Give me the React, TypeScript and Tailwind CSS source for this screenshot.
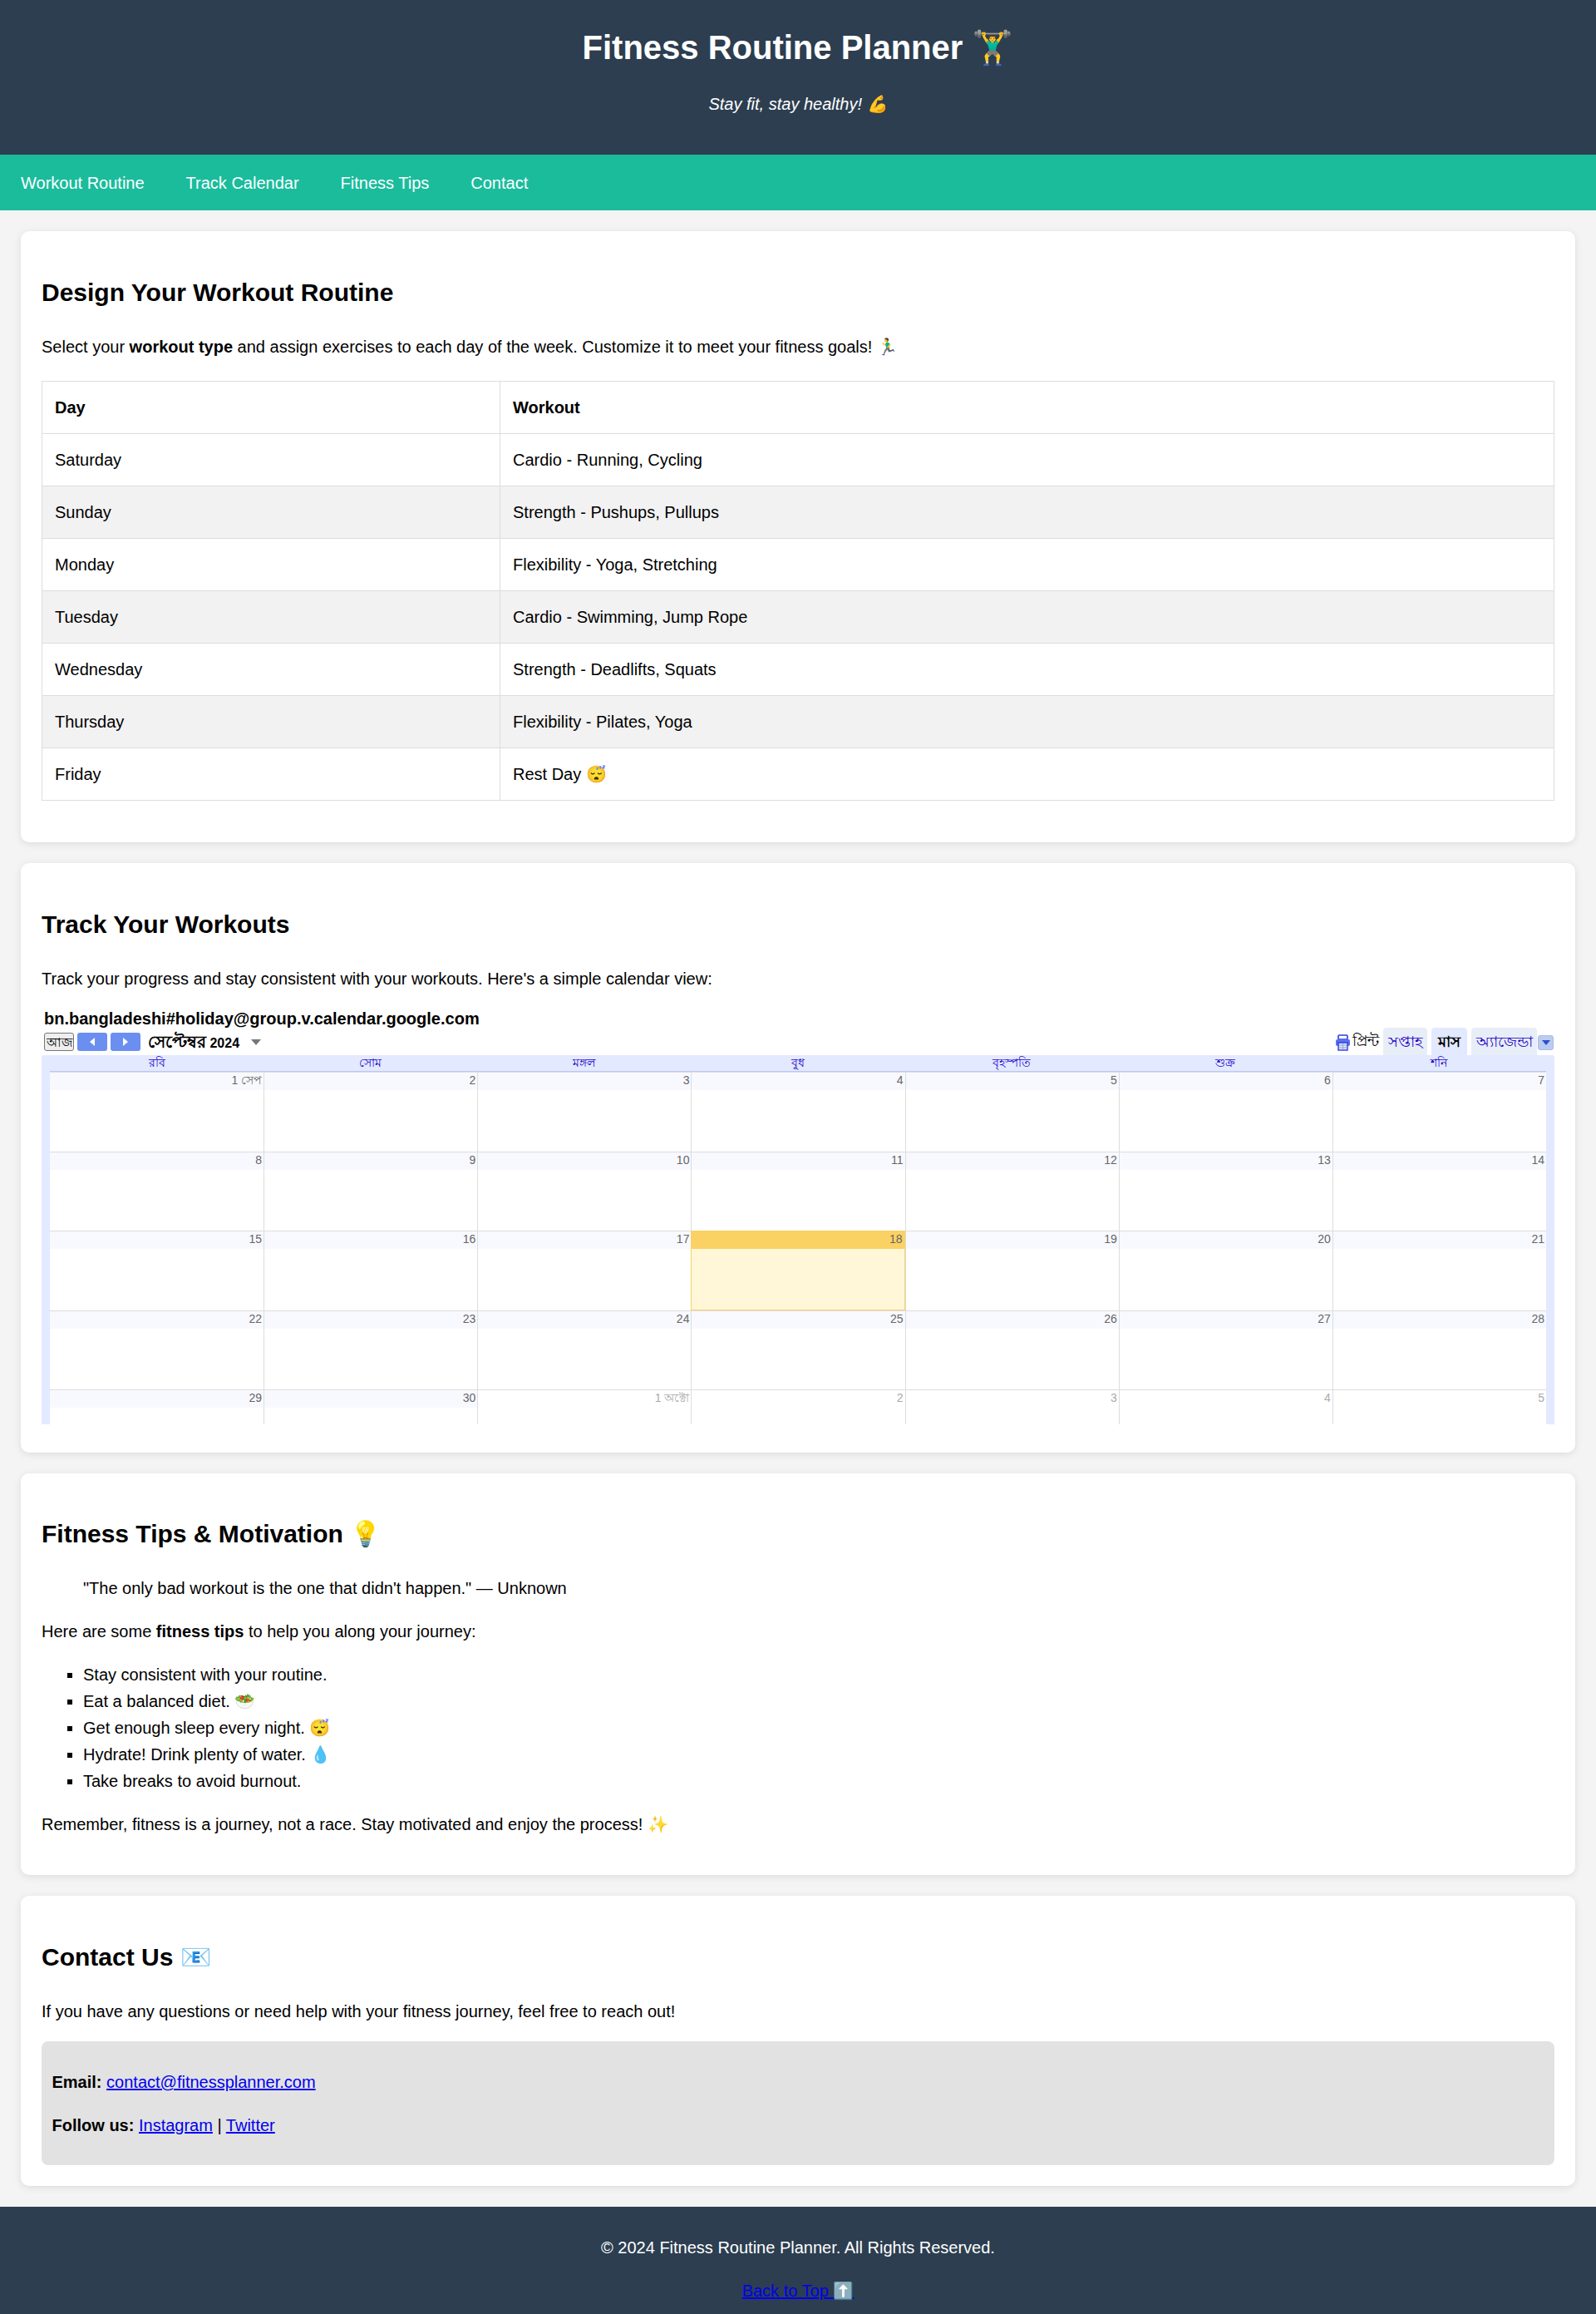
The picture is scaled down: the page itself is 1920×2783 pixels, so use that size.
const weekDays = ['রবি', 'সোম', 'মঙ্গল', 'বুধ', 'বৃহস্পতি', 'শুক্র', 'শনি'];

const routine = [
  ['Saturday', 'Cardio - Running, Cycling'],
  ['Sunday', 'Strength - Pushups, Pullups'],
  ['Monday', 'Flexibility - Yoga, Stretching'],
  ['Tuesday', 'Cardio - Swimming, Jump Rope'],
  ['Wednesday', 'Strength - Deadlifts, Squats'],
  ['Thursday', 'Flexibility - Pilates, Yoga'],
  ['Friday', 'Rest Day 😴'],
];

const calendarRows = [
  ['1 সেপ', '2', '3', '4', '5', '6', '7'],
  ['8', '9', '10', '11', '12', '13', '14'],
  ['15', '16', '17', '18', '19', '20', '21'],
  ['22', '23', '24', '25', '26', '27', '28'],
  ['29', '30', '1 অক্টো', '2', '3', '4', '5'],
];

function Card({ title, tight, children }: { title: string; tight?: boolean; children: React.ReactNode }) {
  return (
    <section className="m-[25px] rounded-[10px] bg-white p-[25px] shadow-[0_2px_10px_rgba(0,0,0,0.1)]">
      <h2 className={`text-[30px] leading-[48px] font-bold ${tight ? 'my-[24.25px]' : 'my-[25px]'}`}>{title}</h2>
      {children}
    </section>
  );
}

function Calendar() {
  return (
    <div className="mt-5 mb-[9px] h-[500px] w-[1820px] overflow-hidden text-[14px] leading-none">
      <div className="pl-[3px] text-[20px] leading-[24px] font-bold">
        bn.bangladeshi#holiday@group.v.calendar.google.com
      </div>
      <div className="flex h-[32px] items-end justify-between">
        <div className="flex items-center gap-[4px] pb-[5px] pl-[3px]">
          <button className="h-[22px] w-[36px] rounded-[3px] border border-[#777] bg-[#eee] text-[15px] leading-none">আজ</button>
          <button className="flex h-[22px] w-[36px] items-center justify-center rounded-[3px] bg-[#6b8ff0]">
            <span className="h-0 w-0 border-y-[5px] border-r-[6px] border-y-transparent border-r-white" />
          </button>
          <button className="flex h-[22px] w-[36px] items-center justify-center rounded-[3px] bg-[#6b8ff0]">
            <span className="h-0 w-0 border-y-[5px] border-l-[6px] border-y-transparent border-l-white" />
          </button>
          <span className="ml-[5px] text-[16px] font-bold">
            <span className="text-[20px]">সেপ্টেম্বর</span> 2024
          </span>
          <span className="ml-[10px] h-0 w-0 border-x-[6px] border-t-[7px] border-x-transparent border-t-[#777]" />
        </div>
        <div className="flex items-end pr-[1px]">
          <svg className="mb-[5px]" width="19" height="20" viewBox="0 0 19 20">
            <rect x="4" y="1" width="11" height="5" rx="1" fill="none" stroke="#2a3ee0" strokeWidth="1.6" />
            <rect x="1" y="6" width="17" height="8" rx="2" fill="#5b6ff0" />
            <rect x="4" y="10" width="11" height="9" fill="#dfe4f7" stroke="#2a3ee0" strokeWidth="1.4" />
            <path d="M5 13h9M5 16h9M9.500 11v7" stroke="#9aa5d8" strokeWidth="1" />
          </svg>
          <span className="mr-[5px] mb-[8px] ml-[2px] text-[18px]">প্রিন্ট</span>
          <div className="flex h-[33px] w-[53px] items-end justify-center rounded-t-[4px] bg-[#e8eef7] pb-[7px] text-[18px] text-[#2200cc]">সপ্তাহ</div>
          <div className="ml-[5px] flex h-[33px] w-[43px] items-end justify-center rounded-t-[4px] bg-[#e3e9ff] pb-[7px] text-[18px] font-bold">মাস</div>
          <div className="ml-[5px] flex h-[33px] w-[79px] items-end justify-center rounded-t-[4px] bg-[#e8eef7] pb-[7px] text-[18px] text-[#2200cc]">অ্যাজেন্ডা</div>
          <div className="mb-[6px] ml-[1px] flex h-[18px] w-[19px] items-center justify-center rounded-[3px] border border-[#a9bbea] bg-[#bccbf0]">
            <span className="h-0 w-0 border-x-[5px] border-t-[6px] border-x-transparent border-t-[#2a4fd0]" />
          </div>
        </div>
      </div>
      <div className="h-[444px] rounded-t-[3px] bg-[#e3e9ff] px-[10px]">
        <div className="grid h-[20px] grid-cols-7 border-b border-[#bcc8f5] text-center leading-[19px] text-[#2200cc]">
          {weekDays.map((d) => (
            <div key={d}>{d}</div>
          ))}
        </div>
        <div className="h-[424px] overflow-hidden bg-white">
          {calendarRows.map((row, r) => (
            <div key={r} className="grid h-[95.5px] grid-cols-7">
              {row.map((label, c) => {
                const today = r === 2 && c === 3;
                const otherMonth = r === 4 && c >= 2;
                return (
                  <div
                    key={c}
                    className={
                      today
                        ? 'border border-[#fad165] bg-[#fff7d7]'
                        : `border-t border-[#dddddd] ${c > 0 ? 'border-l' : ''}`
                    }
                  >
                    <div
                      className={`h-[21px] pt-[2px] pr-[2px] text-right ${
                        today ? 'bg-[#fad163] text-[#666]' : otherMonth ? 'text-[#aaa]' : 'bg-[#f8f9ff] text-[#666]'
                      }`}
                    >
                      {label}
                    </div>
                  </div>
                );
              })}
            </div>
          ))}
        </div>
      </div>
    </div>
  );
}

export default function App() {
  return (
    <div className="bg-[#f4f4f4] font-['Liberation_Sans',Arial,sans-serif] text-[20px] leading-[32px] text-black">
      <header className="bg-[#2c3e50] p-[25px] text-center text-white">
        <h1 className="mb-5 text-[40px] leading-[64px] font-bold">Fitness Routine Planner 🏋️‍♂️</h1>
        <p className="my-5 italic">Stay fit, stay healthy! 💪</p>
      </header>

      <nav className="flex h-[67px] items-center gap-[50px] bg-[#1abc9c] px-[25px] text-white">
        <a href="#routine">Workout Routine</a>
        <a href="#calendar">Track Calendar</a>
        <a href="#tips">Fitness Tips</a>
        <a href="#contact">Contact</a>
      </nav>

      <Card title="Design Your Workout Routine">
        <p className="my-5">
          Select your <strong>workout type</strong> and assign exercises to each day of the week. Customize it to meet
          your fitness goals! 🏃‍♂️
        </p>
        <table className="my-[25px] w-full border-collapse">
          <thead>
            <tr>
              <th className="w-[551px] border border-[#ddd] p-[15px] text-left">Day</th>
              <th className="border border-[#ddd] p-[15px] text-left">Workout</th>
            </tr>
          </thead>
          <tbody>
            {routine.map(([day, workout], i) => (
              <tr key={day} className={i % 2 === 1 ? 'bg-[#f2f2f2]' : ''}>
                <td className="border border-[#ddd] p-[15px]">{day}</td>
                <td className="border border-[#ddd] p-[15px]">{workout}</td>
              </tr>
            ))}
          </tbody>
        </table>
      </Card>

      <Card title="Track Your Workouts">
        <p className="my-5">Track your progress and stay consistent with your workouts. Here's a simple calendar view:</p>
        <Calendar />
      </Card>

      <Card title="Fitness Tips & Motivation 💡" tight>
        <blockquote className="my-5 ml-[50px]">"The only bad workout is the one that didn't happen." — Unknown</blockquote>
        <p className="my-5">
          Here are some <strong>fitness tips</strong> to help you along your journey:
        </p>
        <ul className="my-5 list-[square] pl-[50px]">
          <li>Stay consistent with your routine.</li>
          <li>Eat a balanced diet. 🥗</li>
          <li>Get enough sleep every night. 😴</li>
          <li>Hydrate! Drink plenty of water. 💧</li>
          <li>Take breaks to avoid burnout.</li>
        </ul>
        <p className="my-5">Remember, fitness is a journey, not a race. Stay motivated and enjoy the process! ✨</p>
      </Card>

      <Card title="Contact Us 📧">
        <p className="my-5">If you have any questions or need help with your fitness journey, feel free to reach out!</p>
        <div className="rounded-lg bg-[#e2e2e2] px-[12.5px] pt-[13.5px] pb-[11.5px]">
          <p className="my-5">
            <strong>Email:</strong>{' '}
            <a className="text-[#0000ee] underline" href="mailto:contact@fitnessplanner.com">
              contact@fitnessplanner.com
            </a>
          </p>
          <p className="my-5">
            <strong>Follow us:</strong>{' '}
            <a className="text-[#0000ee] underline" href="#instagram">
              Instagram
            </a>{' '}
            |{' '}
            <a className="text-[#0000ee] underline" href="#twitter">
              Twitter
            </a>
          </p>
        </div>
      </Card>

      <footer className="bg-[#2c3e50] px-[12.5px] pt-[13.5px] pb-[11.5px] text-center text-white">
        <p className="my-5">© 2024 Fitness Routine Planner. All Rights Reserved.</p>
        <p className="mt-5">
          <a className="text-[#0000ee] underline" href="#top">
            Back to Top ⬆️
          </a>
        </p>
      </footer>
    </div>
  );
}
